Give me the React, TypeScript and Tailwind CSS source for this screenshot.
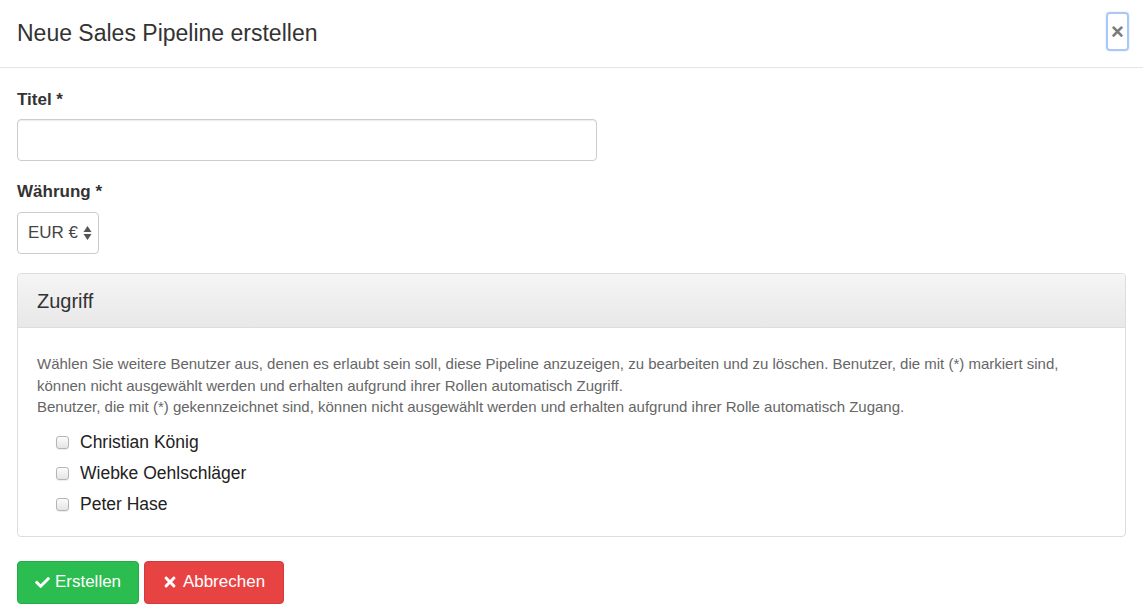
import { FaCheck, FaTimes } from "react-icons/fa";

const users = ["Christian König", "Wiebke Oehlschläger", "Peter Hase"];

function Checkbox() {
  return (
    <span className="inline-block w-[13px] h-[13px] rounded-[3px] border border-[#b5b5b5] bg-gradient-to-b from-[#fcfcfc] to-[#e4e4e4] shadow-[0_1px_1px_rgba(0,0,0,0.08)]" />
  );
}

export default function App() {
  return (
    <div className="w-full min-h-[611px] bg-white text-[#333] font-['Liberation_Sans',Arial,sans-serif]">
      {/* header */}
      <div className="h-[68px] flex items-center justify-between pl-[17px] pr-[14px] border-b border-[#e5e5e5]">
        <h4 className="text-[23px] font-medium text-[#333]">Neue Sales Pipeline erstellen</h4>
        <button className="w-[23px] h-[39px] -mt-[4px] flex items-center justify-center rounded-[4px] border-2 border-[#a9c8f7] shadow-[0_0_2px_#c4dafb] text-[#7a7a7a] text-[22px] font-bold leading-none">
          ×
        </button>
      </div>

      {/* body */}
      <div className="px-[17px] pt-[21px]">
        <label className="block text-[17px] font-bold leading-[22px]">Titel *</label>
        <input
          type="text"
          className="mt-[8px] block w-[580px] h-[42px] rounded-[4px] border border-[#cccccc] px-3 shadow-[inset_0_1px_1px_rgba(0,0,0,0.075)] outline-none"
        />

        <label className="block mt-[20px] text-[17px] font-bold leading-[22px]">Währung *</label>
        <div className="mt-[9px] w-[82px] h-[42px] rounded-[4px] border border-[#cccccc] flex items-center pl-[10px] gap-[5px] text-[17px] text-[#444]">
          <span>EUR €</span>
          <svg width="9" height="16" viewBox="0 0 9 16" className="text-[#555]">
            <path d="M4.5 1 L8.5 7 H0.5 Z" fill="currentColor" />
            <path d="M4.5 15 L8.5 9 H0.5 Z" fill="currentColor" />
          </svg>
        </div>

        {/* panel */}
        <div className="mt-[19px] w-[1109px] rounded-[4px] border border-[#dddddd]">
          <div className="h-[54px] flex items-center px-[19px] rounded-t-[4px] border-b border-[#dddddd] bg-gradient-to-b from-[#f5f5f5] to-[#e8e8e8]">
            <h3 className="text-[20px] text-[#333]">Zugriff</h3>
          </div>
          <div className="px-[19px] pt-[25px] pb-[16px]">
            <p className="text-[15px] leading-[21.5px] text-[#666]">
              Wählen Sie weitere Benutzer aus, denen es erlaubt sein soll, diese Pipeline anzuzeigen, zu bearbeiten und zu löschen. Benutzer, die mit (*) markiert sind,
              <br />
              können nicht ausgewählt werden und erhalten aufgrund ihrer Rollen automatisch Zugriff.
              <br />
              Benutzer, die mit (*) gekennzeichnet sind, können nicht ausgewählt werden und erhalten aufgrund ihrer Rolle automatisch Zugang.
            </p>
            <div className="mt-[9px] ml-[19px] flex flex-col">
              {users.map((u) => (
                <label key={u} className="h-[31px] flex items-center gap-[11px] text-[17.5px] text-[#222]">
                  <Checkbox />
                  <span>{u}</span>
                </label>
              ))}
            </div>
          </div>
        </div>

        {/* actions */}
        <div className="mt-[24px] flex gap-[5px]">
          <button className="h-[43px] w-[122px] flex items-center justify-center gap-[5px] rounded-[4px] border border-[#25ab46] bg-[#2bbd50] text-white text-[17px]">
            <FaCheck className="w-[15px] h-[15px]" />
            Erstellen
          </button>
          <button className="h-[43px] w-[140px] flex items-center justify-center gap-[6px] rounded-[4px] border border-[#d33a3a] bg-[#e84343] text-white text-[17px]">
            <FaTimes className="w-[14px] h-[16px]" />
            Abbrechen
          </button>
        </div>
      </div>
    </div>
  );
}
